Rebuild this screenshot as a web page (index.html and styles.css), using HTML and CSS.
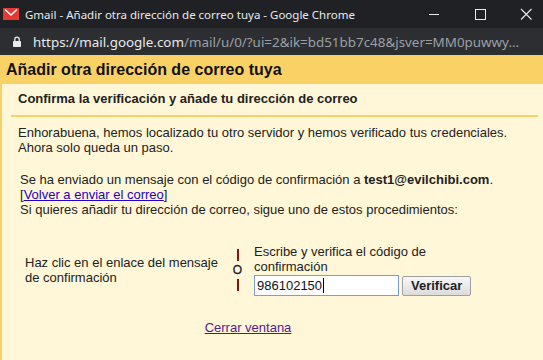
FILE: index.html
```html
<!DOCTYPE html>
<html lang="es">
<head>
  <meta charset="UTF-8">
  <meta name="viewport" content="width=device-width, initial-scale=1.0">
  <title>Añadir otra dirección de correo tuya</title>
  <link rel="stylesheet" href="styles.css">
</head>
<body>
  <!-- Chrome popup window frame -->
  <div class="titlebar">
    <svg class="app-icon" width="16" height="12" viewBox="0 0 16 12">
      <rect x="0" y="0" width="16" height="12" fill="#e53935"/>
      <path d="M2 1.5 L8 7 L14 1.5" fill="none" stroke="#fff" stroke-width="1.6"/>
    </svg>
    <span class="window-title">Gmail - Añadir otra dirección de correo tuya - Google Chrome</span>
    <div class="window-controls">
      <svg width="12" height="12" viewBox="0 0 12 12"><path d="M1 6.5 H11" stroke="#e8eaed" stroke-width="1"/></svg>
      <svg width="12" height="12" viewBox="0 0 12 12"><rect x="1.5" y="1.5" width="10" height="10" fill="none" stroke="#e8eaed" stroke-width="1"/></svg>
      <svg width="12" height="12" viewBox="0 0 12 12"><path d="M1 1 L11.5 11.5 M11.5 1 L1 11.5" stroke="#e8eaed" stroke-width="1.1"/></svg>
    </div>
  </div>
  <div class="addressbar">
    <svg class="lock" width="8" height="11" viewBox="0 0 8 11">
      <path d="M1.8 5 V3.3 A2.2 2.2 0 0 1 6.2 3.3 V5" fill="none" stroke="#e8eaed" stroke-width="1.3"/>
      <rect x="0" y="5" width="8" height="6" rx="0.8" fill="#e8eaed"/>
    </svg>
    <span class="url"><span class="host">https://mail.google.com</span>/mail/u/0/?ui=2&amp;ik=bd51bb7c48&amp;jsver=MM0puwwy...</span>
  </div>

  <!-- Dialog page -->
  <h1 class="page-header">Añadir otra dirección de correo tuya</h1>
  <div class="page-body">
    <h2 class="step-title">Confirma la verificación y añade tu dirección de correo</h2>

    <p class="intro">Enhorabuena, hemos localizado tu otro servidor y hemos verificado tus credenciales.<br>Ahora solo queda un paso.</p>

    <p class="sent">
      Se ha enviado un mensaje con el código de confirmación a <b>test1@evilchibi.com</b>.<br>
      [<a href="#" class="resend">Volver a enviar el correo</a>]<br>
      Si quieres añadir tu dirección de correo, sigue uno de estos procedimientos:
    </p>

    <div class="options">
      <div class="option-row">
        <div class="option-left">Haz clic en el enlace del mensaje de confirmación</div>
        <div class="option-sep">
          <span class="bar"></span>
          <span class="or">O</span>
          <span class="bar"></span>
        </div>
        <div class="option-right">
          <div>Escribe y verifica el código de confirmación</div>
          <div class="code-form">
            <div class="code-input">986102150<span class="caret"></span></div>
            <button type="button" class="verify-btn">Verificar</button>
          </div>
        </div>
      </div>
      <div class="close-row">
        <a href="#" class="close-link">Cerrar ventana</a>
      </div>
    </div>
  </div>
</body>
</html>
```

FILE: styles.css
```css
/* General Styles */
body {
  margin: 0;
  padding: 0;
  width: 543px;
  height: 360px;
  overflow: hidden;
  background-color: #fff7d7;
  font-family: "Liberation Sans", Arial, sans-serif;
  font-size: 13px;
  color: #222;
}

/* Window frame */
.titlebar {
  height: 28px;
  background: #202124;
  display: flex;
  align-items: center;
  color: #e8eaed;
  font-family: "Noto Sans", "Open Sans", sans-serif;
  font-size: 11.5px;
}

.app-icon {
  margin: 0 6px 0 3px;
}

.window-title {
  flex: 1;
  white-space: nowrap;
}

.window-controls {
  display: flex;
  gap: 34px;
  padding-right: 11px;
}

.addressbar {
  height: 27px;
  background: #2d2e31;
  display: flex;
  align-items: center;
  padding-left: 13px;
  font-family: "Noto Sans", "Open Sans", sans-serif;
  font-size: 13.4px;
  color: #9aa0a6;
  white-space: nowrap;
}

.lock {
  margin-right: 12px;
}

.url .host {
  color: #e8eaed;
}

/* Page */
.page-header {
  margin: 0;
  height: 29px;
  line-height: 29px;
  padding-left: 6px;
  background: #fad165;
  font-size: 16px;
  font-weight: bold;
  color: #111;
}

.page-body {
  border-left: 2px solid #fad165;
  height: 276px;
  padding: 7px 5px 0 9px;
}

.step-title {
  margin: 0;
  padding: 0 0 9px 7px;
  border-bottom: 2px solid #fad165;
  font-size: 13px;
  line-height: 15px;
  font-weight: bold;
}

p {
  margin: 0;
  line-height: 15px;
}

.intro {
  margin: 8px 0 0 7px;
}

.sent {
  margin: 17px 0 0 9px;
}

.resend {
  color: #2200cc;
}

/* Confirmation choices */
.options {
  display: inline-flex;
  flex-direction: column;
  margin: 27px 0 0 14px;
}

.option-row {
  display: flex;
  align-items: center;
}

.option-left {
  width: 196px;
}

.option-sep {
  width: 33px;
  display: flex;
  flex-direction: column;
  align-items: center;
}

.option-sep .bar {
  width: 2px;
  height: 12px;
  background: #8b1010;
}

.option-sep .or {
  font-size: 12px;
  line-height: 18px;
  color: #1a1a3a;
  -webkit-text-stroke: 0.3px #1a1a3a;
}

.option-right {
  width: 217px;
}

.code-form {
  display: flex;
  align-items: center;
  gap: 3px;
  margin-top: 1px;
}

.code-input {
  width: 146px;
  height: 21px;
  line-height: 19px;
  box-sizing: border-box;
  padding: 0 2px;
  border: 1px solid #7b9ed6;
  background: #fff;
  color: #111;
}

.caret {
  display: inline-block;
  width: 1px;
  height: 15px;
  margin-left: 1px;
  vertical-align: -3px;
  background: #000;
}

.verify-btn {
  width: 69px;
  height: 20px;
  padding: 0;
  border: 1px solid #a0a0a0;
  border-radius: 2px;
  background: linear-gradient(#f8f8f8, #dcdcdc);
  font-family: "Liberation Sans", Arial, sans-serif;
  font-size: 13px;
  font-weight: bold;
  color: #222;
}

.close-row {
  text-align: center;
  margin-top: 24px;
}

.close-link {
  color: #551a8b;
}
```
